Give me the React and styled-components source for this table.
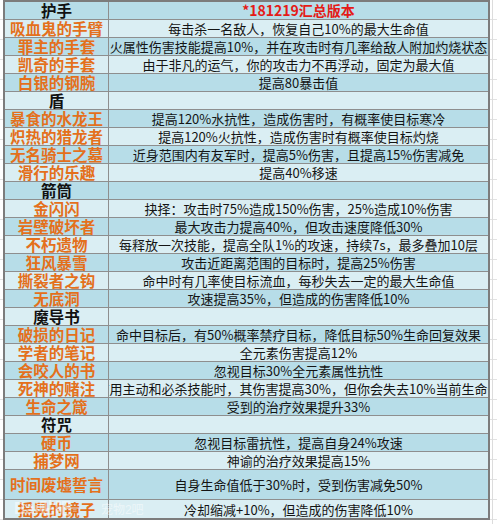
import styled, { createGlobalStyle } from "styled-components"

const GlobalStyle = createGlobalStyle`
  html, body {
    margin: 0;
    padding: 0;
    background: #fff;
  }
  body {
    font-family: "Noto Sans CJK SC", "Noto Sans", sans-serif;
  }
`

const rows = [
    { name: "护手", desc: "*181219汇总版本", head: true },
    { name: "吸血鬼的手臂", desc: "每击杀一名敌人，恢复自己10%的最大生命值" },
    { name: "罪主的手套", desc: "火属性伤害技能提高10%，并在攻击时有几率给敌人附加灼烧状态" },
    { name: "凯奇的手套", desc: "由于非凡的运气，你的攻击力不再浮动，固定为最大值" },
    { name: "白银的钢腕", desc: "提高80暴击值" },
    { name: "盾", desc: "", head: true },
    { name: "暴食的水龙王", desc: "提高120%水抗性，造成伤害时，有概率使目标寒冷" },
    { name: "炽热的猎龙者", desc: "提高120%火抗性，造成伤害时有概率使目标灼烧" },
    { name: "无名骑士之墓", desc: "近身范围内有友军时，提高5%伤害，且提高15%伤害减免" },
    { name: "滑行的乐趣", desc: "提高40%移速" },
    { name: "箭筒", desc: "", head: true },
    { name: "金闪闪", desc: "抉择：攻击时75%造成150%伤害，25%造成10%伤害" },
    { name: "岩壁破坏者", desc: "最大攻击力提高40%，但攻击速度降低30%" },
    { name: "不朽遗物", desc: "每释放一次技能，提高全队1%的攻速，持续7s，最多叠加10层" },
    { name: "狂风暴雪", desc: "攻击近距离范围的目标时，提高25%伤害" },
    { name: "撕裂者之钩", desc: "命中时有几率使目标流血，每秒失去一定的最大生命值" },
    { name: "无底洞", desc: "攻速提高35%，但造成的伤害降低10%" },
    { name: "魔导书", desc: "", head: true },
    { name: "破损的日记", desc: "命中目标后，有50%概率禁疗目标，降低目标50%生命回复效果" },
    { name: "学者的笔记", desc: "全元素伤害提高12%" },
    { name: "会咬人的书", desc: "忽视目标30%全元素属性抗性" },
    { name: "死神的赌注", desc: "使用主动和必杀技能时，其伤害提高30%，但你会失去10%当前生命值" },
    { name: "生命之箴", desc: "受到的治疗效果提升33%" },
    { name: "符咒", desc: "", head: true },
    { name: "硬币", desc: "忽视目标雷抗性，提高自身24%攻速" },
    { name: "捕梦网", desc: "神谕的治疗效果提高15%" },
    { name: "时间废墟誓言", desc: "自身生命值低于30%时，受到伤害减免50%", h: 29 },
    { name: "摇晃的镜子", desc: "冷却缩减+10%，但造成的伤害降低10%", h: 18 },
]

const Page = styled.div`
  position: relative;
  width: 497px;
  height: 524px;
  box-sizing: border-box;
  padding-left: 3px;
  overflow: hidden;
  background-color: #fff;
  background-image:
    linear-gradient(to right, transparent 492px, #dcdcdc 492px, #dcdcdc 493px, transparent 493px),
    repeating-linear-gradient(to bottom, transparent 0 19px, #e2e2e2 19px 20px, transparent 20px 20px);
`

const Sheet = styled.div`
  display: grid;
  grid-template-columns: 103px 379px;
  gap: 1px;
  width: fit-content;
  border: 2px solid #7c7c7c;
  background: #8e8e8e;
`

const Cell = styled.div`
  display: flex;
  align-items: center;
  justify-content: center;
  height: ${p => p.$h || 17}px;
  overflow: hidden;
  white-space: nowrap;
  background: ${p => (p.$dark ? "#b7dde8" : "#daeef3")};
`

const Name = styled.span`
  display: block;
  font-size: 15.5px;
  font-weight: 700;
  line-height: 17px;
  color: ${p => (p.$head ? "#111" : "#e4701c")};
`

const Desc = styled.span`
  display: block;
  flex-shrink: 0;
  font-size: 13px;
  line-height: 17px;
  color: #141414;
`

const Version = styled.span`
  display: block;
  font-size: 14px;
  font-weight: 700;
  line-height: 17px;
  color: #e41b17;
`

const Watermark = styled.div`
  position: absolute;
  left: 14px;
  top: 500px;
  display: flex;
  align-items: baseline;
  font-family: "Liberation Sans", "Noto Sans CJK SC", sans-serif;
  line-height: 18px;
  color: rgba(255, 255, 255, 0.5);
  pointer-events: none;
`

const MarkBrand = styled.span`
  font-size: 16px;
  font-weight: 700;
`

const MarkSub = styled.span`
  font-size: 12px;
  margin-left: 30px;
`

export default function App() {
    return (
        <Page>
            <GlobalStyle />
            <Sheet>
                {rows.map((row, i) => (
                    <Row key={i} row={row} dark={i % 2 === 0} />
                ))}
            </Sheet>
            <Watermark>
                <MarkBrand>Bai贴吧</MarkBrand>
                <MarkSub>宠物2吧</MarkSub>
            </Watermark>
        </Page>
    )
}

const Row = ({ row, dark }) => (
    <>
        <Cell $dark={dark} $h={row.h}>
            <Name $head={row.head}>{row.name}</Name>
        </Cell>
        <Cell $dark={dark} $h={row.h}>
            {row.head && row.desc ? <Version>{row.desc}</Version> : <Desc>{row.desc}</Desc>}
        </Cell>
    </>
)
